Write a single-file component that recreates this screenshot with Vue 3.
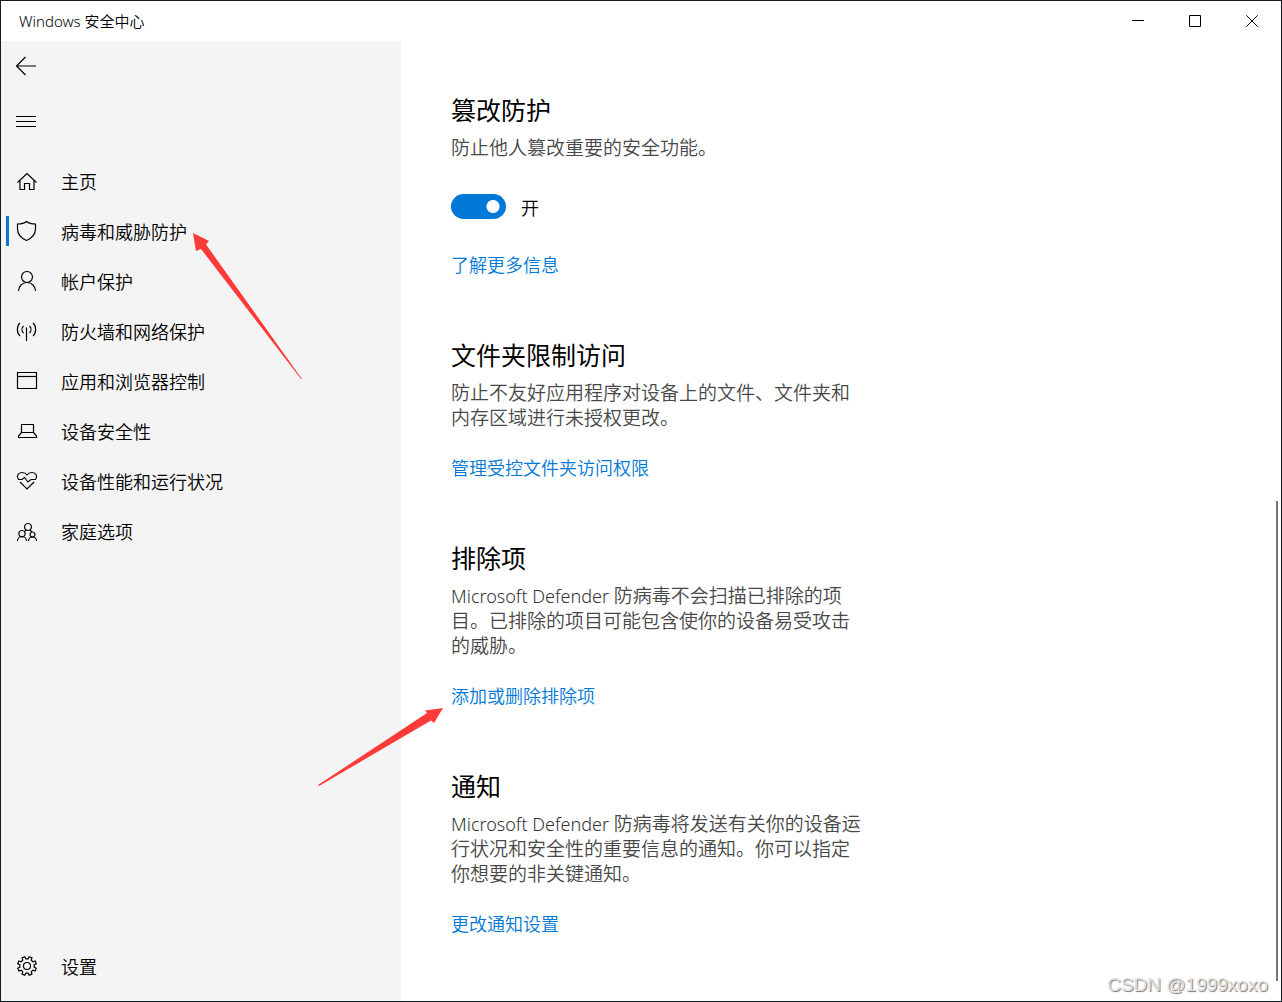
<script setup>
import { ref } from 'vue'

const navItems = [
  { id: 'home', label: '主页', paths: ['M2.5 12.5 L12 3.5 L21.5 12.5', 'M5 10.5 V19.5 H9.5 V13.5 H14.5 V19.5 H19 V10.5'] },
  { id: 'virus', label: '病毒和威胁防护', paths: ['M11.5 1.5 C9 3.5 6 4 2.5 4 V9 C2.5 15 7 18.5 11.5 20.5 C16 18.5 20.5 15 20.5 9 V4 C17 4 14 3.5 11.5 1.5 Z'] },
  { id: 'account', label: '帐户保护', paths: ['M12 1.5 A5.5 5.5 0 1 1 11.99 1.5 Z', 'M3.5 21 A8.5 8.5 0 0 1 20.5 21'] },
  { id: 'firewall', label: '防火墙和网络保护', paths: ['M11.5 7.5 V21', 'M5 3 C1.5 6 1.5 13 5 16', 'M8.5 6 C6.5 8 6.5 11 8.5 13', 'M18 3 C21.5 6 21.5 13 18 16', 'M14.5 6 C16.5 8 16.5 11 14.5 13'] },
  { id: 'apps', label: '应用和浏览器控制', paths: ['M2.5 2.5 H21.5 V18.5 H2.5 Z', 'M2.5 6.5 H21.5'] },
  { id: 'device', label: '设备安全性', paths: ['M6.5 4.5 H18.5 V12.5 H6.5 Z', 'M6.5 12.5 L3.5 16 V17.5 H21.5 V16 L18.5 12.5'] },
  { id: 'health', label: '设备性能和运行状况', paths: ['M3.5 9.5 C1 6 3 2.5 7 2.5 C9.5 2.5 11 3.5 12 5 C13 3.5 14.5 2.5 17 2.5 C21 2.5 23 6 20.5 9.5', 'M3 9.5 H7 L9.5 7.5 L13 12 L16 9.5 H21', 'M5 12 L12 19 L19 12'] },
  { id: 'family', label: '家庭选项', paths: ['M13 3.5 A3.5 3.5 0 1 1 12.99 3.5 Z', 'M7 10.5 A3.2 3.2 0 1 1 6.99 10.5 Z', 'M17.5 12 A2.5 2.5 0 1 1 17.49 12 Z', 'M2.5 21 A4.5 4.5 0 0 1 11.5 21', 'M13.5 21 A4 4 0 0 1 21.5 21', 'M9.5 11.5 L11 10', 'M15 10 L17 12'] },
]

const current = ref('virus')
const tamperProtection = ref(true)

function gearOutline(cx, cy, outer, inner, teeth) {
  const step = (Math.PI * 2) / teeth
  const points = []
  for (let i = 0; i < teeth; i++) {
    const mid = i * step + step / 2
    for (const [radius, offset] of [[inner, -0.3], [outer, -0.2], [outer, 0.2], [inner, 0.3]]) {
      const angle = mid + offset * step
      points.push(`${(cx + radius * Math.cos(angle)).toFixed(2)} ${(cy + radius * Math.sin(angle)).toFixed(2)}`)
    }
  }
  return `M${points.join(' L')} Z`
}
const gear = gearOutline(12, 11, 9.5, 7.2, 8)
</script>

<template>
  <div class="window">
    <header class="titlebar">
      <span class="title">Windows 安全中心</span>
      <div class="controls">
        <button type="button" aria-label="最小化"><svg width="12" height="12"><path d="M0 5.5 H12" /></svg></button>
        <button type="button" aria-label="最大化"><svg width="12" height="12"><path d="M.5 .5 H11.5 V11.5 H.5 Z" /></svg></button>
        <button type="button" aria-label="关闭"><svg width="12" height="12"><path d="M.3 .3 L11.7 11.7 M11.7 .3 L.3 11.7" /></svg></button>
      </div>
    </header>

    <div class="body">
      <aside class="sidebar">
        <button type="button" class="tool" aria-label="返回">
          <svg class="back" width="22" height="20"><path d="M1 10 H21 M10.5 1 L1.5 10 L10.5 19" /></svg>
        </button>
        <button type="button" class="tool menu" aria-label="菜单">
          <svg width="22" height="12"><path d="M1 .5 H21 M1 5.5 H21 M1 10.5 H21" /></svg>
        </button>
        <nav class="nav">
          <a
            v-for="item in navItems"
            :key="item.id"
            href="#"
            class="nav-item"
            :class="{ active: item.id === current }"
            @click.prevent="current = item.id"
          >
            <svg width="24" height="24" viewBox="0 -1 24 24" aria-hidden="true"><path v-for="d in item.paths" :key="d" :d="d" /></svg>
            <span>{{ item.label }}</span>
          </a>
        </nav>
        <a href="#" class="nav-item settings" @click.prevent>
          <svg width="24" height="24" viewBox="0 -1 24 24" aria-hidden="true"><path :d="gear" /><circle cx="12" cy="11" r="3.5" /></svg>
          <span>设置</span>
        </a>
      </aside>

      <main class="content">
        <section>
          <h2>篡改防护</h2>
          <p>防止他人篡改重要的安全功能。</p>
          <label class="switch">
            <input v-model="tamperProtection" type="checkbox" role="switch" />
            <span>{{ tamperProtection ? '开' : '关' }}</span>
          </label>
          <a href="#" class="link">了解更多信息</a>
        </section>
        <section>
          <h2>文件夹限制访问</h2>
          <p>防止不友好应用程序对设备上的文件、文件夹和内存区域进行未授权更改。</p>
          <a href="#" class="link">管理受控文件夹访问权限</a>
        </section>
        <section>
          <h2>排除项</h2>
          <p><span class="product">Microsoft Defender </span>防病毒不会扫描已排除的项目。已排除的项目可能包含使你的设备易受攻击的威胁。</p>
          <a href="#" class="link">添加或删除排除项</a>
        </section>
        <section>
          <h2>通知</h2>
          <p><span class="product">Microsoft Defender </span>防病毒将发送有关你的设备运行状况和安全性的重要信息的通知。你可以指定你想要的非关键通知。</p>
          <a href="#" class="link">更改通知设置</a>
        </section>
      </main>
    </div>

    <div class="scroll-thumb"></div>
    <svg class="arrows" aria-hidden="true">
      <path d="M193 233 L209 241 L206 244.5 L302 379 L301 379 L201 249 L196 251 Z" />
      <path d="M443 708 L425 710.5 L427 713 L318 785 L319 786 L431 720.5 L434 723 Z" />
    </svg>
    <div class="watermark">CSDN @1999xoxo</div>
  </div>
</template>

<style>
body {
  margin: 0;
}
</style>

<style scoped>
.window {
  position: relative;
  display: flex;
  flex-direction: column;
  box-sizing: border-box;
  min-height: 100vh;
  border: 1px solid #101c22;
  background: #fff;
  color: #000;
  font-family: "Noto Sans", "Noto Sans CJK SC", sans-serif;
}
button {
  padding: 0;
  border: 0;
  background: none;
}
svg {
  flex: none;
  fill: none;
  stroke: #000;
}
.titlebar {
  display: flex;
  justify-content: space-between;
  height: 40px;
}
.title {
  padding-left: 18px;
  font-size: 15px;
  font-weight: 350;
  line-height: 40px;
}
.controls {
  display: flex;
  padding-right: 1px;
}
.controls button {
  display: grid;
  place-items: center;
  width: 57px;
}
.body {
  display: flex;
  flex: 1;
}
.sidebar {
  display: flex;
  flex-direction: column;
  box-sizing: border-box;
  width: 400px;
  padding-bottom: 10px;
  background: #f4f4f4;
}
.tool {
  display: flex;
  align-items: center;
  width: 50px;
  height: 50px;
  padding-left: 14px;
}
.back {
  stroke-width: 1.2;
}
.menu {
  margin-top: 6px;
}
.nav {
  margin-top: 9px;
}
.nav-item {
  position: relative;
  display: flex;
  align-items: center;
  gap: 22px;
  height: 50px;
  padding-left: 14px;
  color: #000;
  font-size: 18px;
  font-weight: 350;
  text-decoration: none;
}
.nav-item svg {
  stroke-width: 1.2;
}
.nav-item.active::before {
  content: "";
  position: absolute;
  top: 10px;
  left: 5px;
  width: 3px;
  height: 30px;
  background: #0078d7;
}
.settings {
  margin-top: auto;
}
.content {
  display: flex;
  flex: 1;
  flex-direction: column;
  gap: 62px;
  padding: 54px 50px 50px;
}
h2 {
  margin: 0 0 11px;
  font-size: 25px;
  font-weight: 400;
  line-height: 30px;
}
p {
  max-width: 417px;
  margin: 0 0 25px;
  color: #484848;
  font-size: 19px;
  font-weight: 350;
  line-height: 25px;
}
.product {
  color: #333;
  font-size: 18px;
}
.switch {
  display: flex;
  align-items: center;
  gap: 15px;
  height: 25px;
  margin: 33px 0 34px;
  font-size: 18px;
  font-weight: 350;
}
.switch input {
  box-sizing: border-box;
  width: 55px;
  height: 25px;
  margin: 0;
  border-radius: 13px;
  background: radial-gradient(circle at 42px 50%, #fff 6px, #0078d7 7px);
  appearance: none;
}
.switch input:not(:checked) {
  background: radial-gradient(circle at 13px 50%, #fff 6px, #777 7px);
}
.link {
  display: block;
  width: fit-content;
  color: #0078d7;
  font-size: 18px;
  font-weight: 350;
  line-height: 25px;
  text-decoration: none;
}
.scroll-thumb {
  position: absolute;
  right: 3px;
  bottom: 20px;
  width: 2px;
  height: 48%;
  background: #777;
}
.arrows {
  position: absolute;
  top: -1px;
  left: -1px;
  width: 100%;
  height: 100%;
  pointer-events: none;
}
.arrows path {
  fill: #fc3b38;
  stroke: none;
}
.watermark {
  position: absolute;
  right: 13px;
  bottom: 5px;
  color: #e2e2e2;
  font-family: "Liberation Sans", sans-serif;
  font-size: 19px;
  line-height: 22px;
  text-shadow: 1px 1px 1px #777;
}
</style>
